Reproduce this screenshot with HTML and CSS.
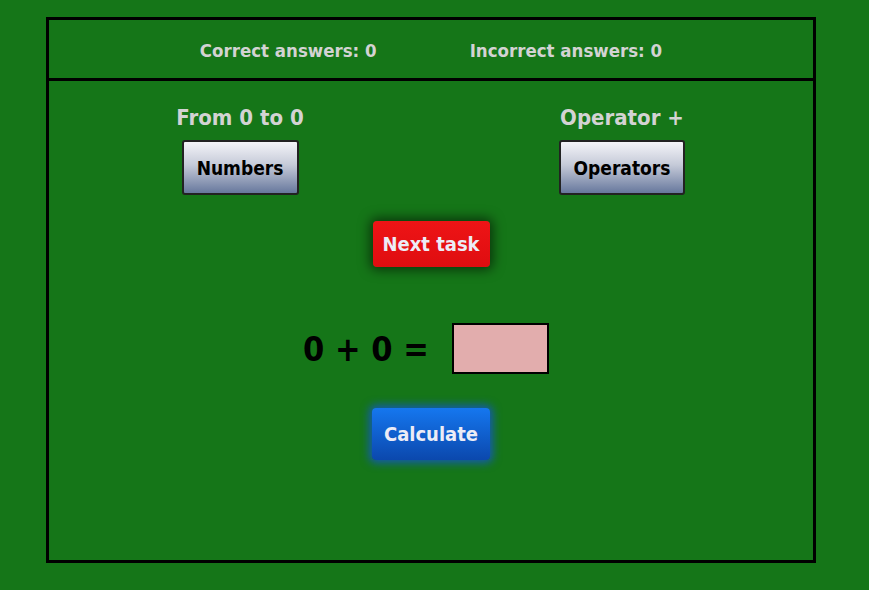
FILE: index.html
```html
<!DOCTYPE html>
<html>
<head>
<meta charset="utf-8">
<link rel="stylesheet" href="styles.css">
</head>
<body>
<div class="app">
  <div class="header">
    <span class="stat">Correct answers: 0</span>
    <span class="stat">Incorrect answers: 0</span>
  </div>
  <div class="main">
    <div class="settings">
      <div class="setting">
        <div class="label">From 0 to 0</div>
        <button class="btn-light btn-numbers">Numbers</button>
      </div>
      <div class="setting">
        <div class="label">Operator +</div>
        <button class="btn-light btn-operators">Operators</button>
      </div>
    </div>
    <button class="btn-next">Next task</button>
    <div class="equation">
      <span class="expr">0 + 0 =</span>
      <div class="answer"></div>
    </div>
    <button class="btn-calc">Calculate</button>
  </div>
</div>
</body>
</html>
```

FILE: styles.css
```css
html, body {
  margin: 0;
  padding: 0;
  background: #157618;
  font-family: "DejaVu Sans Condensed", "DejaVu Sans", Verdana, sans-serif;
}
.app {
  margin: 17px 0 0 46px;
  width: 764px;
  height: 540px;
  border: 3px solid #000;
  display: flex;
  flex-direction: column;
}
.header {
  height: 56px;
  padding-top: 2px;
  border-bottom: 3px solid #000;
  display: flex;
  justify-content: center;
  align-items: center;
  gap: 93px;
  flex: none;
}
.stat {
  color: #d3d3d3;
  font-weight: bold;
  font-size: 18.5px;
}
.main {
  flex: 1;
  display: flex;
  flex-direction: column;
  align-items: center;
}
.settings {
  width: 100%;
  display: flex;
  margin-top: 23px;
}
.setting {
  flex: 1;
  display: flex;
  flex-direction: column;
  align-items: center;
}
.label {
  color: #d3d3d3;
  font-weight: bold;
  font-size: 22px;
  line-height: 26px;
  padding-top: 1px;
}
button {
  font-family: "DejaVu Sans Condensed", "DejaVu Sans", Verdana, sans-serif;
  font-weight: bold;
  cursor: pointer;
}
.btn-light {
  margin-top: 9px;
  height: 55px;
  border: 2px solid #222;
  border-radius: 3px;
  background: linear-gradient(#f4f4f8, #c5cad8 45%, #67789d);
  color: #000;
  font-size: 19px;
  padding: 0;
}
.btn-numbers { width: 117px; }
.btn-operators { width: 126px; }
.btn-next {
  margin-top: 26px;
  width: 117px;
  height: 46px;
  border: none;
  border-radius: 4px;
  background: linear-gradient(#ee1416, #df0d10);
  color: #ececf6;
  font-size: 20px;
  padding: 0;
  box-shadow: 0 0 12px 3px rgba(0, 0, 0, 0.55);
}
.equation {
  margin-top: 56px;
  display: flex;
  align-items: center;
  gap: 23px;
  margin-right: 10px;
}
.expr {
  font-size: 34px;
  font-weight: bold;
  color: #000;
}
.answer {
  width: 93px;
  height: 47px;
  border: 2px solid #000;
  background: #e2adad;
}
.btn-calc {
  margin-top: 34px;
  width: 118px;
  height: 52px;
  border: none;
  border-radius: 4px;
  background: linear-gradient(#1577ef, #0b48ad);
  color: #ececf6;
  font-size: 20px;
  padding: 0;
  box-shadow: 0 0 8px 3px rgba(20, 80, 230, 0.75);
}
```
